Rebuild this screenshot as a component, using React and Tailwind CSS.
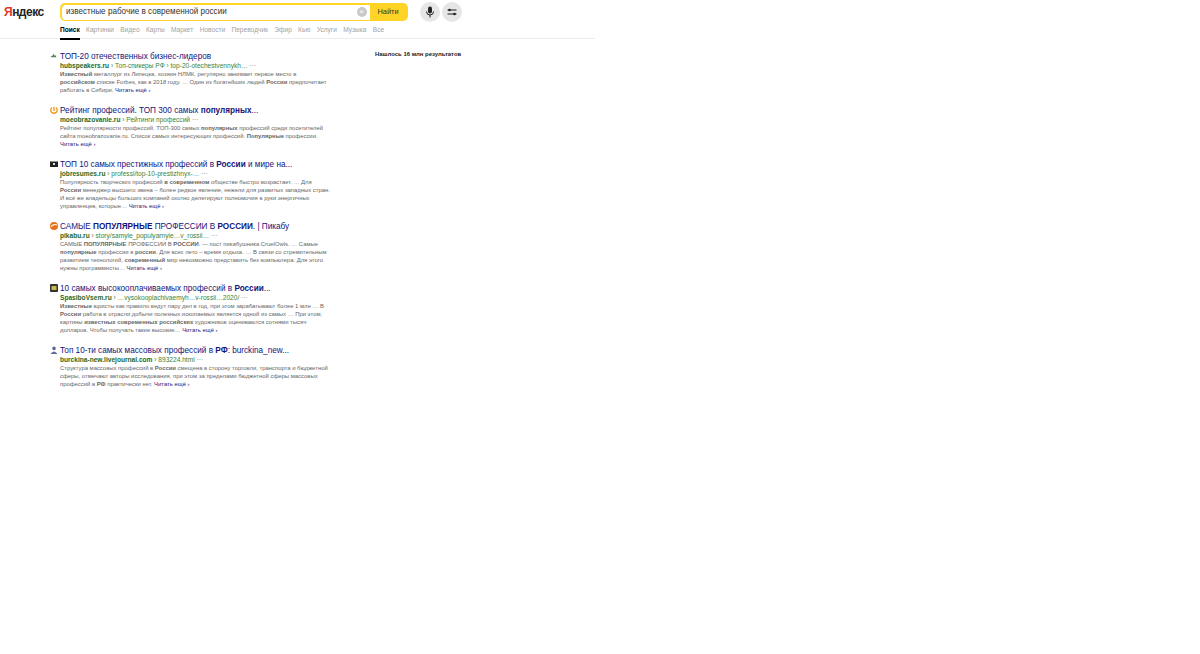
const B = ({ children }) => <b className="font-bold">{children}</b>;

const tabs = ["Картинки", "Видео", "Карты", "Маркет", "Новости", "Переводчик", "Эфир", "Кью", "Услуги", "Музыка", "Все"];

const More = () => <span className="text-[#20207f] whitespace-nowrap">Читать ещё ›</span>;

const Fav = ({ kind }) => {
  if (kind === 0) return <svg viewBox="0 0 8 8" className="w-[7px] h-[7px]"><path d="M1 5l2-1 1-2 1 2h2v2H1z" fill="#4a8a5a" /></svg>;
  if (kind === 1) return <svg viewBox="0 0 8 8" className="w-2 h-2"><path d="M2 1.5a3.2 3.2 0 1 0 4 0" fill="none" stroke="#f09a20" strokeWidth="1.4" /><path d="M4 1v4" stroke="#f09a20" strokeWidth="1.4" /></svg>;
  if (kind === 2) return <svg viewBox="0 0 8 8" className="w-2 h-2"><rect x="0" y="1.5" width="8" height="5.5" fill="#222" /><rect x="3" y="3" width="2" height="2" fill="#ddd" /></svg>;
  if (kind === 3) return <svg viewBox="0 0 8 8" className="w-2 h-2"><circle cx="4" cy="4" r="4" fill="#e8701a" /><path d="M1 4.5q3-3 6-1.5" stroke="#fff" strokeWidth="1.2" fill="none" /></svg>;
  if (kind === 4) return <svg viewBox="0 0 8 8" className="w-2 h-2"><rect width="8" height="8" rx="1" fill="#333" /><rect x="1.5" y="2" width="5" height="4" fill="#c8b84a" /></svg>;
  return <svg viewBox="0 0 8 8" className="w-2 h-2"><circle cx="4" cy="2.4" r="1.8" fill="#5a6a9a" /><path d="M0.5 8q3.5-5 7 0z" fill="#5a6a9a" /></svg>;
};

const results = [
  {
    title: <>ТОП-20 отечественных бизнес-лидеров</>,
    site: "hubspeakers.ru",
    path: "› Топ-спикеры РФ › top-20-otechestvennykh…",
    text: <><B>Известный</B> металлург из Липецка, хозяин НЛМК, регулярно занимает первое место в <B>российском</B> списке Forbes, как в 2018 году. … Один из богатейших людей <B>России</B> предпочитает работать в Сибири. </>,
  },
  {
    title: <>Рейтинг профессий. ТОП 300 самых <B>популярных</B>...</>,
    site: "moeobrazovanie.ru",
    path: "› Рейтинги профессий",
    text: <>Рейтинг популярности профессий. ТОП-300 самых <B>популярных</B> профессий среди посетителей сайта moeobrazovanie.ru. Список самых интересующих профессий. <B>Популярные</B> профессии. </>,
  },
  {
    title: <>ТОП 10 самых престижных профессий в <B>России</B> и мире на...</>,
    site: "jobresumes.ru",
    path: "› professi/top-10-prestizhnyx-…",
    text: <>Популярность творческих профессий <B>в современном</B> обществе быстро возрастает. … Для <B>России</B> менеджер высшего звена – более редкое явление, нежели для развитых западных стран. И всё же владельцы больших компаний охотно делегируют полномочия в руки энергичных управленцев, которые… </>,
  },
  {
    title: <>САМЫЕ <B>ПОПУЛЯРНЫЕ</B> ПРОФЕССИИ В <B>РОССИИ</B>. | Пикабу</>,
    site: "pikabu.ru",
    path: "› story/samyie_populyarnyie…v_rossii…",
    text: <>САМЫЕ <B>ПОПУЛЯРНЫЕ</B> ПРОФЕССИИ В <B>РОССИИ</B>. — пост пикабушника CruelOwls. … Самые <B>популярные</B> профессии в <B>россии</B>. Для всех лето – время отдыха. … В связи со стремительным развитием технологий, <B>современный</B> мир невозможно представить без компьютера. Для этого нужны программисты… </>,
  },
  {
    title: <>10 самых высокооплачиваемых профессий в <B>России</B>...</>,
    site: "SpasiboVsem.ru",
    path: "› …vysokooplachivaemyh…v-rossii…2020/",
    text: <><B>Известные</B> юристы как правило ведут пару дел в год, при этом зарабатывают более 1 млн … В <B>России</B> работа в отрасли добычи полезных ископаемых является одной из самых … При этом, картины <B>известных современных российских</B> художников оцениваются сотнями тысяч долларов. Чтобы получать такие высокие… </>,
  },
  {
    title: <>Топ 10-ти самых массовых профессий в <B>РФ</B>: burckina_new...</>,
    site: "burckina-new.livejournal.com",
    path: "› 893224.html",
    text: <>Структура массовых профессий в <B>России</B> смещена в сторону торговли, транспорта и бюджетной сферы, отмечают авторы исследования, при этом за пределами бюджетной сферы массовых профессий в <B>РФ</B> практически нет. </>,
  },
];

export default function App() {
  return (
    <div className="w-[1200px] h-[654px] bg-white overflow-hidden font-['Liberation_Sans',Arial,sans-serif]">
      <header className="w-[595px] h-[39px] border-b border-[#ececec]">
        <div className="flex items-start pt-[3px]">
          <div className="w-[60px] pl-[4px] pt-[2px] text-[12px] leading-[14px] font-bold tracking-[-0.5px] text-[#222]">
            <span className="text-[#e3342b]">Я</span>ндекс
          </div>
          <div className="w-[348px] h-[18px] flex rounded-[5px] bg-[#ffd426] p-[1.5px]">
            <div className="flex-1 bg-white rounded-l-[4px] flex items-center justify-between pl-[4.5px] pr-[3px]">
              <span className="text-[8.15px] text-[#333]">известные рабочие в современной россии</span>
              <span className="w-[10px] h-[10px] rounded-full bg-[#c9c9c9] flex items-center justify-center text-white text-[8px] leading-none">×</span>
            </div>
            <div className="w-[37px] flex items-center justify-center text-[7.4px] text-[#333]">Найти</div>
          </div>
          <div className="ml-[12px] w-[20px] h-[20px] -mt-[1px] rounded-full bg-[#e6e6e6] flex items-center justify-center">
            <svg viewBox="0 0 12 12" className="w-[12px] h-[12px]">
              <rect x="4" y="0.5" width="4" height="7" rx="2" fill="#222" />
              <path d="M2.5 5.5a3.5 3.5 0 0 0 7 0M6 9v2.5" stroke="#222" strokeWidth="1" fill="none" />
            </svg>
          </div>
          <div className="ml-[2px] w-[20px] h-[20px] -mt-[1px] rounded-full bg-[#e6e6e6] flex items-center justify-center">
            <svg viewBox="0 0 12 12" className="w-[12px] h-[12px]">
              <path d="M1.5 4h9M1.5 8h9" stroke="#222" strokeWidth="1" />
              <circle cx="3.5" cy="4" r="1.3" fill="#222" />
              <circle cx="8.5" cy="8" r="1.3" fill="#222" />
            </svg>
          </div>
        </div>
        <nav className="flex items-start pl-[60px] mt-[3px] text-[6.6px] leading-[10px] gap-[6.3px] text-[#a3a3a3]">
          <span className="h-[14.5px] border-b-2 border-black font-bold text-black">Поиск</span>
          {tabs.map((t) => <span key={t}>{t}</span>)}
        </nav>
      </header>
      <div className="flex">
        <main className="w-[330px] pt-[12px] flex flex-col gap-[11px] pl-[50px] box-content">
          {results.map((r, i) => (
            <article key={r.site} className="flex">
              <div className="w-[10px] shrink-0 pt-[1px]"><Fav kind={i} /></div>
              <div className="w-[270px]">
                <h2 className="h-[11px] text-[8.2px] leading-[11px] font-normal text-[#14147a] whitespace-nowrap">{r.title}</h2>
                <div className="h-[8px] text-[6.6px] leading-[8px] text-[#3a843a] whitespace-nowrap">
                  <b className="text-[#1f6a1f]">{r.site}</b> {r.path} <span className="text-[#777]">···</span>
                </div>
                <p className="text-[5.9px] leading-[8px] text-[#666]">{r.text}<More /></p>
              </div>
            </article>
          ))}
        </main>
        <aside className="ml-[-5px] pt-[11px] text-[5.95px] leading-[8px] font-bold text-[#222]">Нашлось 16 млн результатов</aside>
      </div>
    </div>
  );
}
